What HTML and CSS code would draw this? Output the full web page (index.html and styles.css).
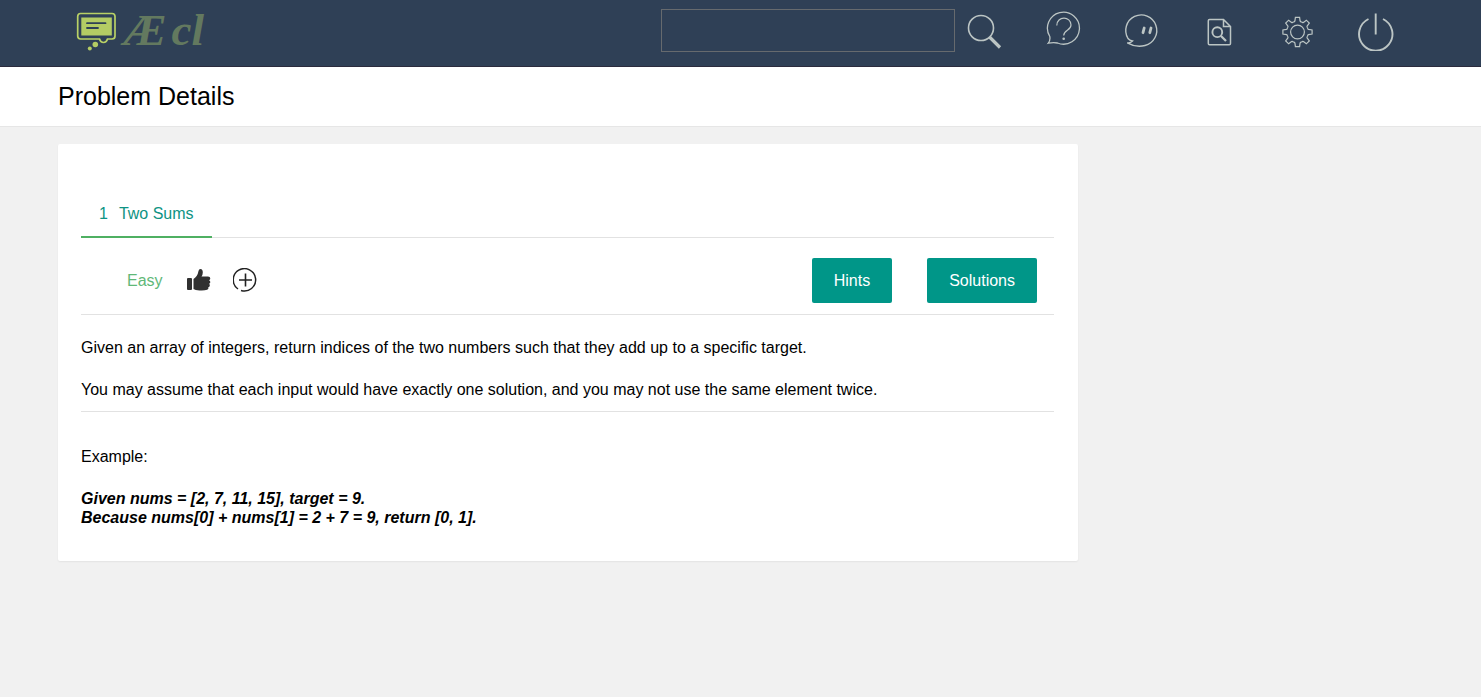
FILE: index.html
```html
<!DOCTYPE html>
<html lang="en">
<head>
<meta charset="utf-8">
<title>Problem Details</title>
<link rel="stylesheet" href="styles.css">
</head>
<body>
<header class="topbar">
  <a class="logo" href="#">
    <svg class="logo-mark" width="42" height="42" viewBox="0 0 42 42" aria-hidden="true">
      <path d="M4.500 3.500H36Q39 3.500 39 6.500V26Q39 29 36 29H31.500Q30.500 32.500 27.500 32.500Q24.500 32.500 23.500 29H4.500Q1.700 29 1.700 26V6.500Q1.700 3.500 4.500 3.500Z" fill="none" stroke="#b9d166" stroke-width="1.700"/>
      <rect x="5.300" y="7.500" width="30.500" height="18" fill="#b4cc64"/>
      <path d="M11 13.200H29.500M11 18H22" stroke="#2f4156" stroke-width="1.800" stroke-linecap="round"/>
      <circle cx="19.300" cy="34.500" r="2.800" fill="#b4cc64"/>
      <circle cx="13.800" cy="38.500" r="2" fill="#b4cc64"/>
    </svg>
    <span class="logo-text"><span>Æ</span><span>cl</span></span>
  </a>
  <form class="search" role="search">
    <input class="search-input" type="text" aria-label="Search">
    <button class="search-button" type="button" aria-label="Search">
      <svg class="icon" viewBox="0 0 40 40"><circle cx="17" cy="17" r="12.500"/><path d="M25.500 26L36 36.500" stroke-width="3.200"/></svg>
    </button>
  </form>
  <nav class="tools" aria-label="Tools">
    <button class="tool" type="button" aria-label="Help">
      <svg class="icon" viewBox="0 0 40 40"><path d="M6.800 25.500A16 16 0 1 1 14.500 32Q10.500 31 5.300 32.200Q7.500 29.500 6.800 25.500Z" stroke-width="1.300"/><path d="M13.800 14.500C13.800 4.800 28 4.800 28 14C28 19.500 20.700 19 20.700 24.500" stroke-width="1.200"/><circle cx="20.700" cy="27.800" r="1.300" class="solid"/></svg>
    </button>
    <button class="tool" type="button" aria-label="Chat">
      <svg class="icon" viewBox="0 0 40 40"><path d="M11.500 30Q9.500 32.200 6.300 31.800Q15 36.800 24 34.500A15.500 15.500 0 1 0 7 27.500Q8.500 29.500 11.500 30Z" stroke-width="1.400"/><path d="M23.200 17L22 21.700M30 17L28.800 21.700" stroke-width="2.800" stroke-linecap="round"/></svg>
    </button>
    <button class="tool" type="button" aria-label="Search documents">
      <svg class="icon" viewBox="0 0 40 40"><path d="M10.500 8.500H24.500L31.500 15.500V32.500Q31.500 33.700 30.300 33.700H10.500Q9.300 33.700 9.300 32.500V9.700Q9.300 8.500 10.500 8.500ZM24.500 8.500V15.500H31.500" stroke-width="1.500"/><circle cx="18.300" cy="21.200" r="4.900" stroke-width="1.900"/><path d="M22 25L27 30" stroke-width="2.300"/></svg>
    </button>
    <button class="tool" type="button" aria-label="Settings">
      <svg class="icon" viewBox="0 0 40 40">
        <defs><path id="tooth" d="M-4.200-10.100Q-2.900-10-2.600-11L-2.100-14.600H2.100L2.600-11Q2.900-10 4.200-10.100"/></defs>
        <g transform="translate(20.500 21)" stroke-width="1.200">
          <use href="#tooth"/><use href="#tooth" transform="rotate(45)"/><use href="#tooth" transform="rotate(90)"/><use href="#tooth" transform="rotate(135)"/><use href="#tooth" transform="rotate(180)"/><use href="#tooth" transform="rotate(225)"/><use href="#tooth" transform="rotate(270)"/><use href="#tooth" transform="rotate(315)"/>
          <circle r="6.900"/>
        </g>
      </svg>
    </button>
    <button class="tool" type="button" aria-label="Log out">
      <svg class="icon" viewBox="0 0 40 40"><path d="M13.500 8A16.700 16.700 0 1 0 28 8M20.700 2.500V23.500" stroke-width="1.900"/></svg>
    </button>
  </nav>
</header>
<div class="page-head"><h1 class="page-title">Problem Details</h1></div>
<main class="content">
  <article class="card">
    <nav class="tabs"><a class="tab" href="#"><span>1</span><span>Two Sums</span></a></nav>
    <div class="actions">
      <span class="level">Easy</span>
      <button class="mini" type="button" aria-label="Like">
        <svg width="26" height="26" viewBox="0 0 26 26"><path transform="translate(1.500 .5)" fill="#303030" d="M1.500 9.500H4.500Q5.500 9.500 5.500 10.500V20.500Q5.500 21.500 4.500 21.500H1.500Q.5 21.500 .5 20.500V10.500Q.5 9.500 1.500 9.500ZM7 10.500Q11 8 12 2.500Q12.300 .5 14 .5Q16.300 .5 16.300 4Q16.300 6 15 8H21.500Q23.800 8.200 23.800 10Q23.800 11.200 22.500 11.700Q23.900 12.200 23.800 13.700Q23.700 15 22.500 15.300Q23.500 16 23.300 17.200Q23.100 18.500 21.800 18.700Q22.500 20.500 20.700 21.300Q18 22.300 13 22Q8.500 21.700 7 20.500Z"/></svg>
      </button>
      <button class="mini" type="button" aria-label="Add">
        <svg width="26" height="26" viewBox="0 0 26 26" fill="none" stroke="#222"><path d="M5 21A11.200 11.200 0 1 1 8 22.500" stroke-width="1.500"/><path d="M12.500 5.500V18.500M6 12H19" stroke-width="1.600"/></svg>
      </button>
      <div class="buttons">
        <button class="primary" type="button">Hints</button>
        <button class="primary" type="button">Solutions</button>
      </div>
    </div>
    <div class="statement">
      <p>Given an array of integers, return indices of the two numbers such that they add up to a specific target.</p>
      <p>You may assume that each input would have exactly one solution, and you may not use the same element twice.</p>
    </div>
    <div class="example">
      <p>Example:</p>
      <p class="sample">Given nums = [2, 7, 11, 15], target = 9.<br>Because nums[0] + nums[1] = 2 + 7 = 9, return [0, 1].</p>
    </div>
  </article>
</main>
</body>
</html>
```
FILE: styles.css
```css
* { box-sizing: border-box; }
body {
  margin: 0;
  background: #f1f1f1;
  color: #000;
  font: 16px/19px "Liberation Sans", Arial, sans-serif;
}
button {
  border: 0;
  padding: 0;
  background: none;
  font: inherit;
  cursor: pointer;
}
svg { display: block; }
p, h1 { margin: 0; }

.topbar {
  display: flex;
  align-items: center;
  height: 67px;
  padding: 0 67px 5px 76px;
  background: #2f4056;
  border-bottom: 1px solid #2b2b3d;
}
.logo {
  display: flex;
  align-items: center;
  gap: 6px;
  color: #63795f;
  text-decoration: none;
}
.logo-text {
  display: flex;
  gap: 5px;
  font: italic bold 45px/45px "Liberation Serif", serif;
}
.search {
  display: flex;
  align-items: center;
  gap: 9px;
  margin-left: auto;
  margin-right: 20px;
}
.search-input {
  width: 294px;
  height: 43px;
  padding: 0 10px;
  border: 1px solid #666a6e;
  background: transparent;
  color: #c2c8c6;
  font: inherit;
}
.icon {
  width: 40px;
  height: 40px;
  fill: none;
  stroke: #bcc5c4;
  stroke-width: 1.6;
}
.solid { fill: #bcc5c4; stroke: none; }
.tools { display: flex; }
.tool {
  display: flex;
  justify-content: center;
  width: 78px;
}

.page-head {
  padding: 15px 58px;
  background: #fff;
  border-bottom: 1px solid #e6e6e6;
}
.page-title {
  font-size: 25px;
  font-weight: 400;
  line-height: 29px;
}

.content { padding: 17px 63px 17px 58px; }
.card {
  width: 75%;
  padding: 47px 24px 34px 23px;
  background: #fff;
  border-radius: 2px;
  box-shadow: 0 1px 2px rgba(0, 0, 0, .06);
}
.tabs {
  display: flex;
  border-bottom: 1px solid #e2e2e2;
}
.tab {
  display: flex;
  gap: 11px;
  margin-bottom: -1px;
  padding: 13px 18px;
  border-bottom: 2px solid #4fb062;
  color: #0e9384;
  text-decoration: none;
}
.actions {
  display: flex;
  align-items: center;
  gap: 22px;
  padding: 20px 17px 11px 46px;
  border-bottom: 1px solid #e2e2e2;
}
.level { color: #5fb878; }
.buttons {
  display: flex;
  gap: 35px;
  margin-left: auto;
}
.primary {
  padding: 13px 22px;
  border-radius: 2px;
  background: #009688;
  color: #fff;
}
.statement {
  display: grid;
  gap: 23px;
  padding: 23px 0 12px;
  border-bottom: 1px solid #e2e2e2;
}
.example {
  display: grid;
  gap: 23px;
  padding-top: 35px;
}
.sample {
  font-style: italic;
  font-weight: 700;
}
```
